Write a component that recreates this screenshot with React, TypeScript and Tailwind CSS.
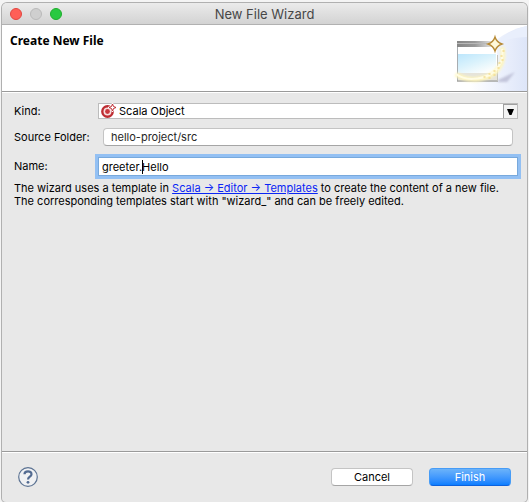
import React from "react";

function WizardBanner() {
  return (
    <svg className="h-full w-[98px] shrink-0" viewBox="0 0 98 66" preserveAspectRatio="xMaxYMid slice" aria-hidden="true">
      <defs>
        <linearGradient id="sweep" x1="0" y1="0" x2="1" y2="0">
          <stop offset="0" stopColor="#ffffff" />
          <stop offset="0.5" stopColor="#eef2fd" />
          <stop offset="1" stopColor="#dde5f8" />
        </linearGradient>
        <linearGradient id="bar" x1="0" y1="0" x2="1" y2="0">
          <stop offset="0" stopColor="#858585" />
          <stop offset="0.5" stopColor="#999999" />
          <stop offset="1" stopColor="#e6e6e6" />
        </linearGradient>
        <linearGradient id="pane" x1="0" y1="0" x2="0.7" y2="1">
          <stop offset="0" stopColor="#bce6fc" />
          <stop offset="0.5" stopColor="#daf2fc" />
          <stop offset="1" stopColor="#fdfefd" />
        </linearGradient>
        <linearGradient id="edge" x1="0" y1="0" x2="1" y2="0">
          <stop offset="0" stopColor="#858d93" />
          <stop offset="1" stopColor="#c5c9cc" />
        </linearGradient>
        <filter id="soft" x="-30%" y="-30%" width="160%" height="160%">
          <feGaussianBlur stdDeviation="1.3" />
        </filter>
      </defs>
      <path d="M40 66C44 34 66 7 98 1V66Z" fill="url(#sweep)" />
      <path d="M64 22C71 13 83 4 98 1V12C84 12 72 16 64 22Z" fill="#e9effc" />
      <path d="M69 55L86 47L78 57H69Z" fill="#a8a8c4" opacity="0.6" filter="url(#soft)" />
      <rect x="28" y="17" width="40" height="39" fill="#ffffff" />
      <rect x="28" y="16" width="36" height="6" fill="url(#bar)" />
      <path d="M28 18.5H58" stroke="#b8b8b8" />
      <rect x="28" y="48" width="40" height="7" fill="#e6e4da" />
      <rect x="29" y="29" width="38" height="19" fill="url(#pane)" />
      <path d="M28 28.5H68" stroke="url(#edge)" strokeWidth="1.5" />
      <path d="M28.5 22V56" stroke="#a8adb1" />
      <path d="M28 56H69" stroke="#a3a39f" strokeWidth="1.5" />
      <path d="M68.500 30V56" stroke="#c3c3bc" />
      <path d="M27 49C36 56 51 56 62 50C72 44 76 34 73 22" fill="none" stroke="#fff6bd" strokeWidth="5" opacity="0.9" filter="url(#soft)" />
      <path d="M27 49C36 56 51 55 62 49C71 43 75 33 73 24" fill="none" stroke="#fffce4" strokeWidth="2" />
      <g fill="none" stroke="#f3dd90" strokeWidth="1.5" strokeLinecap="round">
        <path d="M55 52h1M60 49h1M60 53h1M65 50h1M65 46h1M69 43h1M70 38h1M73 35h1M72 31h1M74 26h1" />
      </g>
      <path d="M66 12Q67.500 17 73 19Q67.500 21 66 26Q64.500 21 59 19Q64.500 17 66 12Z" fill="#fff8d8" stroke="#b78a35" strokeWidth="1.4" strokeLinejoin="miter" />
    </svg>
  );
}

function ObjectIcon() {
  return (
    <svg className="pointer-events-none absolute left-[3px] top-0 size-4" viewBox="0 0 16 16" aria-hidden="true">
      <circle cx="6.500" cy="8.500" r="5.200" fill="#f7dede" stroke="#bd2c32" strokeWidth="2.400" />
      <circle cx="6.500" cy="8.500" r="2.400" fill="#c9383e" />
      <path d="M11.500 0L13 3L16 4.500L13 6L11.500 9L10 6L7 4.500L10 3Z" fill="#fff" stroke="#fff" />
      <path d="M11.500 1L12.500 3.500L15 4.500L12.500 5.500L11.500 8L10.500 5.500L8 4.500L10.500 3.500Z" fill="#fff" stroke="#bd2c32" strokeWidth="1" />
    </svg>
  );
}

export default function App() {
  return (
    <div className="flex min-h-screen flex-col bg-[#f4f4f4] px-[2px] pt-[3px] font-['Inter','Liberation_Sans',sans-serif] text-[11px] leading-[13px] text-black">
      <main className="flex flex-1 flex-col rounded-t-[5px] rounded-b-[4px] bg-[#e8e8e8] shadow-[0_0_0_1px_#b0b0b0]">
        <header className="relative flex h-[22px] items-center justify-center rounded-t-[5px] border-b border-[#b1b1b1] bg-linear-to-b from-[#ebebeb] to-[#d3d3d3]">
          <div className="absolute left-2 flex gap-2">
            <button aria-label="Close" className="size-3 rounded-full border border-[#e2463f] bg-[#ff5f57]" />
            <button aria-label="Minimize" disabled className="size-3 rounded-full border border-[#bababa] bg-[#cfcfcf]" />
            <button aria-label="Zoom" className="size-3 rounded-full border border-[#1dad2b] bg-[#28c940]" />
          </div>
          <h1 className="pt-px text-[13px] text-[#474747]">New File Wizard</h1>
        </header>

        <section className="flex h-[67px] justify-between border-b border-[#9a9a9a] bg-white">
          <h2 className="pl-2 pt-[9px] font-['Noto_Sans','Open_Sans',sans-serif] text-xs leading-[14px] font-bold">Create New File</h2>
          <WizardBanner />
        </section>

        <form className="flex-1 border-t border-white px-[9px] pt-[10px] pl-3" onSubmit={(e) => e.preventDefault()}>
          <div className="flex items-center">
            <label htmlFor="kind" className="w-[84px] shrink-0">Kind:</label>
            <div className="relative h-4 flex-1">
              <select id="kind" className="block h-4 w-full appearance-none border border-[#bcbcbc] bg-white pl-5 leading-[14px]">
                <option>Scala Object</option>
              </select>
              <ObjectIcon />
              <span className="pointer-events-none absolute inset-y-px right-px flex w-[14px] items-center justify-center border-t border-l border-[#a0a0a0] bg-[#f3f3f3]">
                <svg className="h-[6px] w-[7px]" viewBox="0 0 7 6" aria-hidden="true"><path d="M0 0H7L4.500 6H2.500Z" /></svg>
              </span>
            </div>
          </div>

          <div className="mt-[9px] flex items-center pr-[5px]">
            <label htmlFor="folder" className="w-[89px] shrink-0 pt-px">Source Folder:</label>
            <button id="folder" type="button" className="h-[18px] flex-1 rounded-[4px] border border-[#c4c4c4] border-b-[#a5a5a5] bg-white pl-[7px] text-left leading-4 text-[#262626]">hello-project/src</button>
          </div>

          <div className="mt-[11px] flex items-center">
            <label htmlFor="name" className="w-[84px] shrink-0">Name:</label>
            <div className="relative flex-1">
              <input id="name" defaultValue="greeter.Hello" className="block h-[19px] w-full border border-[#78a9dc] bg-white px-[3px] leading-[17px] ring-[3px] ring-[#93c0f3] outline-none" />
              <span className="absolute top-[3px] left-[44px] h-[14px] w-px bg-black" />
            </div>
          </div>

          <p className="mt-[6px]">
            The wizard uses a template in <a href="#templates" className="text-[#0a25f5] underline">Scala → Editor → Templates</a> to create the content of a new file. The corresponding templates start with "wizard_" and can be freely edited.
          </p>
        </form>

        <footer className="flex h-[51px] items-center border-t border-[#9a9a9a] pr-4 pl-4 shadow-[inset_0_1px_0_#fff]">
          <button aria-label="Help" className="size-5">
            <svg viewBox="0 0 20 20" fill="none" aria-hidden="true">
              <circle cx="10" cy="10" r="9.300" fill="#f0f1f3" stroke="#5c7393" strokeWidth="1.200" />
              <path d="M6.500 7.300C6.500 3.300 13.500 3.300 13.500 7.200C13.500 9.600 10 9.700 10 12.500" stroke="#536b91" strokeWidth="2.200" />
              <circle cx="10" cy="15.300" r="1.400" fill="#536b91" />
            </svg>
          </button>
          <div className="ml-auto flex gap-4">
            <button className="h-[18px] w-[82px] rounded-[4px] border border-[#c4c4c4] border-b-[#a5a5a5] bg-white leading-4">Cancel</button>
            <button className="h-[18px] w-[82px] rounded-[4px] border border-[#479cf6] border-b-[#0c61dd] bg-linear-to-b from-[#6bb3fa] to-[#087eff] leading-4 text-white">Finish</button>
          </div>
        </footer>
      </main>
    </div>
  );
}
